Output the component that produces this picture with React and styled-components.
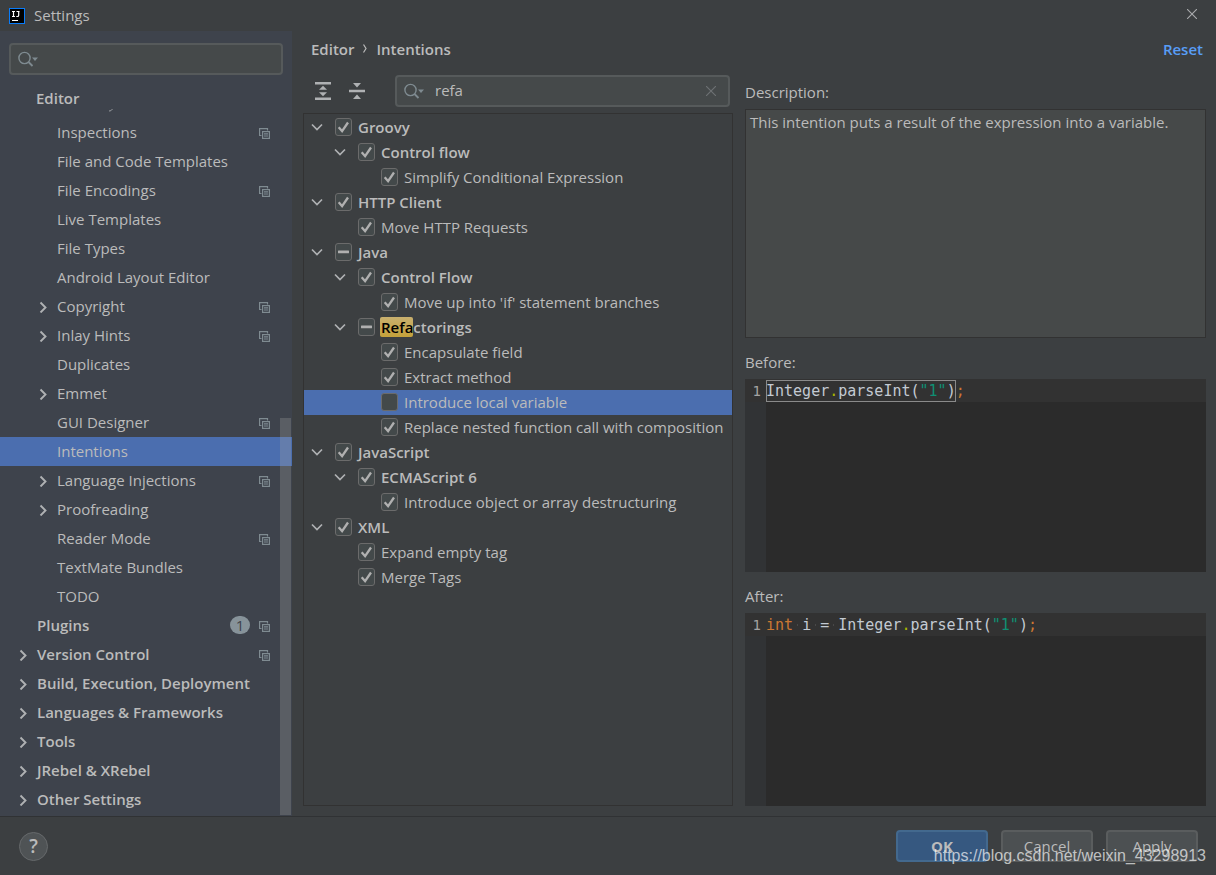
import React, { useState } from 'react';
import styled, { createGlobalStyle, css } from 'styled-components';

const colors = {
  window: '#3c3f41',
  sidebar: '#3e434c',
  field: '#45494a',
  line: '#323232',
  text: '#bbbbbb',
  selection: '#4b6eaf',
  icon: '#afb1b3',
  mutedIcon: '#7f8b91',
  editor: '#2b2b2b',
};

const GlobalStyle = createGlobalStyle`
  *, *::before, *::after { box-sizing: border-box; }
  body {
    margin: 0;
    background: ${colors.window};
    color: ${colors.text};
    font-family: "Open Sans", "Noto Sans", sans-serif;
    font-size: 15px;
    line-height: 20px;
  }
  button, input { font: inherit; color: inherit; }
  svg { display: block; flex: none; }
`;

const Window = styled.div`
  position: relative;
  display: flex;
  flex-direction: column;
  min-height: 100vh;
`;

const TitleBar = styled.header`
  display: flex;
  align-items: center;
  gap: 9px;
  height: 31px;
  padding: 0 19px 0 9px;
`;

const Title = styled.h1`
  flex: 1;
  margin: 0;
  padding-bottom: 2px;
  font-size: 15px;
  font-weight: 400;
`;

const PlainButton = styled.button`
  display: flex;
  align-items: center;
  justify-content: center;
  padding: 0;
  border: 0;
  background: none;
`;

const CloseButton = styled(PlainButton)`
  padding-bottom: 3px;
`;

const Body = styled.div`
  display: flex;
  flex: 1;
`;

const Sidebar = styled.nav`
  position: relative;
  display: flex;
  flex-direction: column;
  flex: none;
  width: 292px;
  padding: 12px 0 1px;
  background: ${colors.sidebar};
`;

const SearchBox = styled.label`
  display: flex;
  align-items: center;
  gap: 10px;
  height: 32px;
  padding: 0 12px 0 7px;
  border: 2px solid #565a5b;
  border-radius: 4px;
  background: ${colors.field};
`;

const SidebarSearch = styled(SearchBox)`
  margin: 0 9px 10px;
`;

const FilterSearch = styled(SearchBox)`
  flex: 1;
  margin: 0 3px 0 16px;
`;

const SearchInput = styled.input`
  flex: 1;
  min-width: 0;
  padding: 0 0 2px;
  border: 0;
  outline: 0;
  background: none;
`;

const StickyGroup = styled.div`
  height: 24px;
  padding: 3px 36px;
  font-weight: 600;
`;

const ScrolledTail = styled.div`
  height: 9px;
  padding-left: 109px;
`;

const List = styled.ul`
  margin: 0;
  padding: 0;
  list-style: none;
`;

const NavRow = styled.li`
  display: flex;
  align-items: center;
  height: 29px;
  padding: 0 22px 0 ${(p) => (p.$top ? 15 : 35)}px;
  background: ${(p) => (p.$selected ? colors.selection : 'transparent')};
  font-weight: ${(p) => (p.$top ? 600 : 400)};
`;

const ArrowSlot = styled.span`
  display: flex;
  flex: none;
  justify-content: center;
  width: 16px;
  margin-right: 6px;
`;

const NavLink = styled.a`
  flex: 1;
  padding-bottom: 2px;
  color: inherit;
  text-decoration: none;
`;

const Badge = styled.span`
  width: 20px;
  height: 18px;
  margin: 0 9px 1px 0;
  border-radius: 9px;
  background: #87939a;
  color: ${colors.sidebar};
  font-weight: 400;
  line-height: 18px;
  text-align: center;
`;

const CopyMark = styled.span`
  padding-top: 2px;
`;

const ScrollThumb = styled.div`
  position: absolute;
  right: 1px;
  bottom: 1px;
  width: 11px;
  height: 397px;
  background: rgba(166, 166, 166, 0.28);
`;

const Content = styled.main`
  display: flex;
  flex: 1;
  flex-direction: column;
  min-width: 0;
  padding: 0 10px 10px 11px;
`;

const PageHead = styled.div`
  display: flex;
  align-items: center;
  height: 35px;
  margin-bottom: 10px;
  padding: 0 3px 0 8px;
  font-weight: 600;
`;

const Crumbs = styled.h2`
  display: flex;
  align-items: center;
  flex: 1;
  gap: 9px;
  margin: 0;
  font-size: 15px;
  font-weight: 600;
`;

const ResetButton = styled(PlainButton)`
  color: #589df6;
  font-weight: 600;
`;

const Panels = styled.div`
  display: grid;
  flex: 1;
  grid-template-columns: minmax(0, 430fr) minmax(0, 461fr);
  gap: 12px;
`;

const Column = styled.section`
  display: flex;
  flex-direction: column;
`;

const Toolbar = styled.div`
  display: flex;
  align-items: center;
  height: 30px;
  margin-bottom: 7px;
  padding-left: 8px;
`;

const ToolButton = styled(PlainButton)`
  width: 24px;
  height: 24px;
  margin-right: 10px;
`;

const Tree = styled.ul`
  flex: 1;
  margin: 0;
  padding: 1px 0;
  border: 1px solid ${colors.line};
  list-style: none;
`;

const TreeRow = styled.li`
  display: flex;
  align-items: center;
  height: 25px;
  padding: 0 0 1px ${(p) => 5 + p.$level * 23}px;
  background: ${(p) => (p.$selected ? colors.selection : 'transparent')};
  font-weight: ${(p) => (p.$group ? 600 : 400)};
  white-space: nowrap;
`;

const TreeToggle = styled(PlainButton)`
  flex: none;
  width: 16px;
  height: 16px;
  margin-right: 10px;
`;

const ToggleSpace = styled.span`
  flex: none;
  width: 26px;
`;

const TreeLabel = styled.label`
  display: flex;
  align-items: center;
  gap: 6px;
`;

const CheckWrap = styled.span`
  display: grid;
  flex: none;
  width: 17px;
  height: 18px;

  > * { grid-area: 1 / 1; }
  > svg { pointer-events: none; }
`;

const CheckInput = styled.input`
  appearance: none;
  width: 17px;
  height: 18px;
  margin: 0;
  border: 1px solid #6b6b6b;
  border-radius: 3px;
  background: #43494a;
`;

const Match = styled.mark`
  margin-left: -1px;
  padding: 0 0 0 1px;
  border-radius: 2px;
  background: linear-gradient(#c9b06f, #c4a13a);
  color: #000000;
`;

const PanelLabel = styled.h3`
  display: flex;
  align-items: center;
  height: ${(p) => (p.$first ? 33 : 32)}px;
  margin: ${(p) => (p.$first ? 0 : 9)}px 0 0;
  padding-bottom: 2px;
  font-size: 15px;
  font-weight: 400;
`;

const Description = styled.div`
  flex: 223 0 0;
  padding: 2px 4px;
  border: 1px solid #323232;
  background: #464949;
`;

const Editor = styled.div`
  display: grid;
  flex: 193 0 0;
  grid-template-columns: 21px minmax(0, 1fr);
  grid-template-rows: 23px minmax(0, 1fr);
  background: ${colors.editor};
  font-family: "DejaVu Sans Mono", monospace;
  font-size: 15px;
  line-height: 24px;
`;

const LineNumber = styled.span`
  background: #313335;
  box-shadow: inset 0 23px #323232;
  grid-row: 1 / 3;
  padding-right: 5px;
  color: #a4a3a3;
  font-size: 14px;
  text-align: right;
`;

const CodeLine = styled.code`
  background: #323232;
  color: #c3cad2;
  font-family: inherit;
  white-space: pre;
`;

const tokenColors = { keyword: '#cc7832', string: '#0f8f73', dot: '#a9b700' };

const Token = styled.span`
  color: ${(p) => tokenColors[p.$kind]};
`;

const Boxed = styled.span`
  display: inline-block;
  height: 22px;
  line-height: 22px;
  outline: 1px solid #8a8a8a;
  outline-offset: -1px;
`;

const Space = styled.span`
  background: radial-gradient(circle, #484848 1px, transparent 1px);
`;

const Footer = styled.footer`
  display: flex;
  align-items: center;
  gap: 13px;
  height: 59px;
  padding: 0 18px 0 19px;
  border-top: 1px solid #303234;
`;

const HelpButton = styled(PlainButton)`
  width: 29px;
  height: 29px;
  margin-right: auto;
  border: 1px solid #66696b;
  border-radius: 50%;
  background: #4f5355;
  font-size: 19px;
  font-weight: 600;
`;

const DialogButton = styled.button`
  width: 92px;
  height: 32px;
  padding: 0;
  border: 2px solid #5a5d5e;
  border-radius: 4px;
  background: #4c5052;
  ${(p) =>
    p.$primary &&
    css`
      border-color: #43698e;
      background: #365880;
      font-weight: 700;
    `}
`;

const Watermark = styled.span`
  position: absolute;
  right: 10px;
  bottom: 9px;
  color: rgba(255, 255, 255, 0.68);
  font-family: "Liberation Sans", Arial, sans-serif;
  font-size: 16px;
  pointer-events: none;
`;

const LogoIcon = () => (
  <svg width="16" height="16" viewBox="0 0 16 16" aria-hidden="true">
    <rect width="16" height="16" fill="#087cfa" />
    <rect x="1" y="1" width="14" height="14" fill="#000" />
    <path d="M3 3.500h3M4.500 3.500v5M3 8.500h3M7.500 3.500h3M9.700 3.500v3.700q0 1.300-1.300 1.300H7.300M3 12.500h6" fill="none" stroke="#fff" strokeWidth="1.200" />
  </svg>
);

const CloseIcon = ({ size, color }) => (
  <svg width={size} height={size} viewBox="0 0 10 10" aria-hidden="true">
    <path d="M0 0l10 10M10 0L0 10" stroke={color} strokeWidth="1.100" />
  </svg>
);

const SearchIcon = () => (
  <svg width="21" height="18" viewBox="0 0 21 18" aria-hidden="true">
    <circle cx="6.500" cy="8" r="5.600" fill="none" stroke={colors.mutedIcon} strokeWidth="1.400" />
    <path d="M10.500 12l4 4" stroke={colors.mutedIcon} strokeWidth="1.800" />
    <path d="M14 7.500h6l-3 3.600z" fill={colors.mutedIcon} />
  </svg>
);

const ArrowRight = () => (
  <svg width="8" height="12" viewBox="0 0 8 12" aria-hidden="true">
    <path d="M1.500 1.500l5 5-5 5" fill="none" stroke={colors.icon} strokeWidth="1.900" />
  </svg>
);

const ArrowDown = () => (
  <svg width="12" height="8" viewBox="0 0 12 8" aria-hidden="true">
    <path d="M1 1.500l5 5 5-5" fill="none" stroke={colors.icon} strokeWidth="1.700" />
  </svg>
);

const CrumbArrow = () => (
  <svg width="4" height="9" viewBox="0 0 4 9" aria-hidden="true">
    <path d="M.5.500l2.500 4-2.500 4" fill="none" stroke={colors.text} strokeWidth="1.200" />
  </svg>
);

const CopyIcon = () => (
  <svg width="11" height="11" viewBox="0 0 11 11" role="img" aria-label="Project-level setting">
    <path d="M2.500 7.500H.6V.6H8.500v1.900" fill="none" stroke={colors.mutedIcon} strokeWidth="1.200" />
    <rect x="3.600" y="3.600" width="6.800" height="6.800" fill="none" stroke={colors.mutedIcon} strokeWidth="1.200" />
    <path d="M5 5.900h4M5 8h4" stroke={colors.mutedIcon} strokeWidth="1.100" />
  </svg>
);

const ExpandIcon = () => (
  <svg width="16" height="18" viewBox="0 0 16 18" fill={colors.icon} aria-hidden="true">
    <path d="M0 0h16v2.500H0zM0 15.500h16V18H0zM8 3.800l4 4H4zM8 14.200l4-4H4z" />
  </svg>
);

const CollapseIcon = () => (
  <svg width="16" height="18" viewBox="0 0 16 18" fill={colors.icon} aria-hidden="true">
    <path d="M0 7.800h16v2.400H0zM4 1h8L8 5.500zM4 17h8l-4-4.500z" />
  </svg>
);

const CheckMark = () => (
  <svg width="17" height="18" viewBox="0 0 17 18" aria-hidden="true">
    <path d="M3.700 9.200l3.400 4L13 4.500" fill="none" stroke="#b0b0b0" strokeWidth="2.300" />
  </svg>
);

const DashMark = () => (
  <svg width="17" height="18" viewBox="0 0 17 18" aria-hidden="true">
    <rect x="3" y="7.500" width="11" height="2.800" rx=".5" fill="#b0b0b0" />
  </svg>
);

const navItems = [
  { text: 'Inspections', copy: true },
  { text: 'File and Code Templates' },
  { text: 'File Encodings', copy: true },
  { text: 'Live Templates' },
  { text: 'File Types' },
  { text: 'Android Layout Editor' },
  { text: 'Copyright', arrow: true, copy: true },
  { text: 'Inlay Hints', arrow: true, copy: true },
  { text: 'Duplicates' },
  { text: 'Emmet', arrow: true },
  { text: 'GUI Designer', copy: true },
  { text: 'Intentions', selected: true },
  { text: 'Language Injections', arrow: true, copy: true },
  { text: 'Proofreading', arrow: true },
  { text: 'Reader Mode', copy: true },
  { text: 'TextMate Bundles' },
  { text: 'TODO' },
  { text: 'Plugins', top: true, badge: '1', copy: true },
  { text: 'Version Control', top: true, arrow: true, copy: true },
  { text: 'Build, Execution, Deployment', top: true, arrow: true },
  { text: 'Languages & Frameworks', top: true, arrow: true },
  { text: 'Tools', top: true, arrow: true },
  { text: 'JRebel & XRebel', top: true, arrow: true },
  { text: 'Other Settings', top: true, arrow: true },
];

const treeItems = [
  { text: 'Groovy', level: 0, group: true, state: 'on' },
  { text: 'Control flow', level: 1, group: true, state: 'on' },
  { text: 'Simplify Conditional Expression', level: 2, state: 'on' },
  { text: 'HTTP Client', level: 0, group: true, state: 'on' },
  { text: 'Move HTTP Requests', level: 1, state: 'on' },
  { text: 'Java', level: 0, group: true, state: 'mixed' },
  { text: 'Control Flow', level: 1, group: true, state: 'on' },
  { text: "Move up into 'if' statement branches", level: 2, state: 'on' },
  { match: 'Refa', text: 'ctorings', level: 1, group: true, state: 'mixed' },
  { text: 'Encapsulate field', level: 2, state: 'on' },
  { text: 'Extract method', level: 2, state: 'on' },
  { text: 'Introduce local variable', level: 2, state: 'off', selected: true },
  { text: 'Replace nested function call with composition', level: 2, state: 'on' },
  { text: 'JavaScript', level: 0, group: true, state: 'on' },
  { text: 'ECMAScript 6', level: 1, group: true, state: 'on' },
  { text: 'Introduce object or array destructuring', level: 2, state: 'on' },
  { text: 'XML', level: 0, group: true, state: 'on' },
  { text: 'Expand empty tag', level: 1, state: 'on' },
  { text: 'Merge Tags', level: 1, state: 'on' },
];

function TreeItem({ item }) {
  const [state, setState] = useState(item.state);
  return (
    <TreeRow $level={item.level} $group={item.group} $selected={item.selected}>
      {item.group ? (
        <TreeToggle type="button" aria-label="Collapse group">
          <ArrowDown />
        </TreeToggle>
      ) : (
        <ToggleSpace />
      )}
      <TreeLabel>
        <CheckWrap>
          <CheckInput
            type="checkbox"
            checked={state === 'on'}
            onChange={() => setState(state === 'on' ? 'off' : 'on')}
          />
          {state === 'on' && <CheckMark />}
          {state === 'mixed' && <DashMark />}
        </CheckWrap>
        <span>
          {item.match && <Match>{item.match}</Match>}
          {item.text}
        </span>
      </TreeLabel>
    </TreeRow>
  );
}

const ParseCall = () => (
  <>
    Integer<Token $kind="dot">.</Token>parseInt(<Token $kind="string">"1"</Token>)
  </>
);

export default function App() {
  const [navQuery, setNavQuery] = useState('');
  const [query, setQuery] = useState('refa');

  return (
    <Window>
      <GlobalStyle />
      <TitleBar>
        <LogoIcon />
        <Title>Settings</Title>
        <CloseButton type="button" aria-label="Close">
          <CloseIcon size={10} color="#a9abad" />
        </CloseButton>
      </TitleBar>

      <Body>
        <Sidebar aria-label="Settings categories">
          <SidebarSearch>
            <SearchIcon />
            <SearchInput
              aria-label="Search settings"
              value={navQuery}
              onChange={(e) => setNavQuery(e.target.value)}
            />
          </SidebarSearch>
          <StickyGroup>Editor</StickyGroup>
          <ScrolledTail>
            <svg width="4" height="3" viewBox="0 0 4 3" aria-hidden="true">
              <path d="M0 2q2 .4 3.500-2" fill="none" stroke="#9a9da1" />
            </svg>
          </ScrolledTail>
          <List>
            {navItems.map((item) => (
              <NavRow key={item.text} $top={item.top} $selected={item.selected}>
                <ArrowSlot>{item.arrow && <ArrowRight />}</ArrowSlot>
                <NavLink href="#settings">{item.text}</NavLink>
                {item.badge && <Badge>{item.badge}</Badge>}
                {item.copy && (
                  <CopyMark>
                    <CopyIcon />
                  </CopyMark>
                )}
              </NavRow>
            ))}
          </List>
          <ScrollThumb />
        </Sidebar>

        <Content>
          <PageHead>
            <Crumbs>
              <span>Editor</span>
              <CrumbArrow />
              <span>Intentions</span>
            </Crumbs>
            <ResetButton type="button">Reset</ResetButton>
          </PageHead>

          <Panels>
            <Column>
              <Toolbar>
                <ToolButton type="button" aria-label="Expand all">
                  <ExpandIcon />
                </ToolButton>
                <ToolButton type="button" aria-label="Collapse all">
                  <CollapseIcon />
                </ToolButton>
                <FilterSearch>
                  <SearchIcon />
                  <SearchInput
                    aria-label="Filter intentions"
                    value={query}
                    onChange={(e) => setQuery(e.target.value)}
                  />
                  <PlainButton type="button" aria-label="Clear" onClick={() => setQuery('')}>
                    <CloseIcon size={10} color="#6e7274" />
                  </PlainButton>
                </FilterSearch>
              </Toolbar>
              <Tree>
                {treeItems.map((item) => (
                  <TreeItem key={item.text} item={item} />
                ))}
              </Tree>
            </Column>

            <Column>
              <PanelLabel $first>Description:</PanelLabel>
              <Description>This intention puts a result of the expression into a variable.</Description>
              <PanelLabel>Before:</PanelLabel>
              <Editor>
                <LineNumber>1</LineNumber>
                <CodeLine>
                  <Boxed>
                    <ParseCall />
                  </Boxed>
                  <Token $kind="keyword">;</Token>
                </CodeLine>
              </Editor>
              <PanelLabel>After:</PanelLabel>
              <Editor>
                <LineNumber>1</LineNumber>
                <CodeLine>
                  <Token $kind="keyword">int</Token>
                  <Space> </Space>i<Space> </Space>=<Space> </Space>
                  <ParseCall />
                  <Token $kind="keyword">;</Token>
                </CodeLine>
              </Editor>
            </Column>
          </Panels>
        </Content>
      </Body>

      <Footer>
        <HelpButton type="button" aria-label="Help">?</HelpButton>
        <DialogButton type="button" $primary>OK</DialogButton>
        <DialogButton type="button">Cancel</DialogButton>
        <DialogButton type="button">Apply</DialogButton>
      </Footer>
      <Watermark>https://blog.csdn.net/weixin_43298913</Watermark>
    </Window>
  );
}
